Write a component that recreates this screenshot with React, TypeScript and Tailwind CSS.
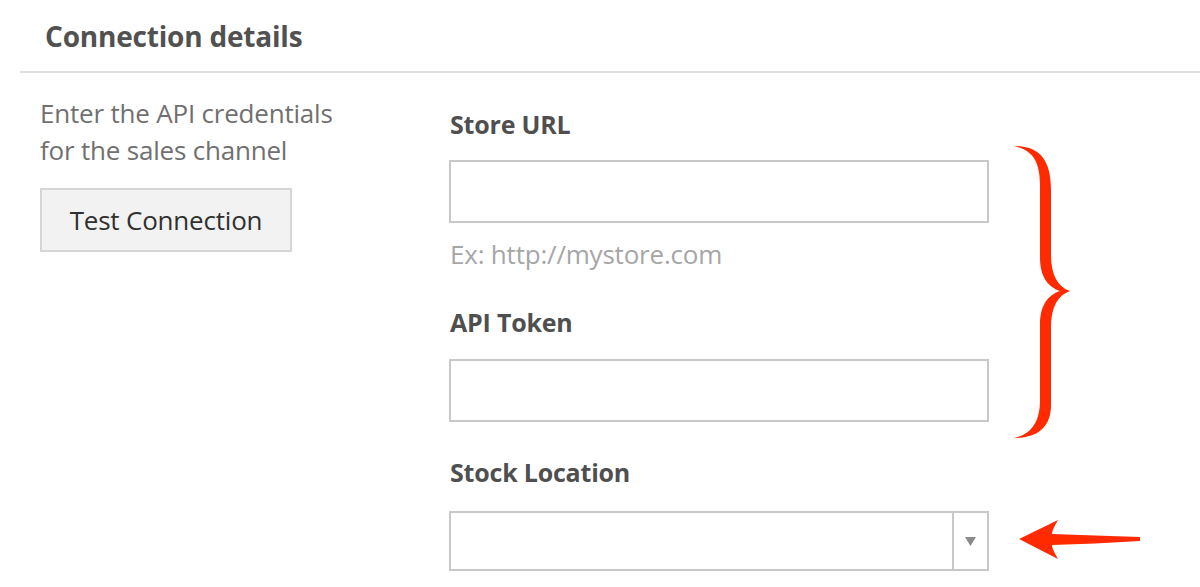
import React from "react";

const Brace = () => (
  <svg className="absolute left-0 top-0 pointer-events-none" width="1200" height="587" viewBox="0 0 1200 587">
    {/* curly brace */}
    <path
      d="M1014,146 C1040,146 1051,160 1051,190 L1051,255 C1051,275 1058,287 1070,291 C1058,295 1051,307 1051,327 L1051,405 C1051,425 1040,438 1014,438 C1033,434 1040,420 1040,400 L1040,325 C1040,305 1048,295 1060,291 C1048,287 1040,277 1040,257 L1040,185 C1040,162 1033,150 1014,146 Z"
      fill="#ff2a00"
    />
    {/* arrow */}
    <path
      d="M1019,539 L1058,520 C1054,527 1052,531 1052,534 C1080,535 1110,536 1140,537 L1140,541 C1110,543 1080,544 1052,545 C1052,548 1054,552 1058,559 Z"
      fill="#ff2a00"
    />
  </svg>
);

export default function App() {
  return (
    <div className="relative w-[1200px] h-[587px] overflow-hidden bg-white font-['Open_Sans',sans-serif]">
      {/* Header */}
      <div className="pl-[45px] pt-[17px] h-[71px]">
        <h2 className="text-[28px] leading-[38px] font-bold tracking-[-0.2px] text-[#515151]">Connection details</h2>
      </div>
      <div className="ml-[20px] h-[2px] bg-[#dedede]" />

      {/* Body */}
      <div className="flex pl-[40px]">
        <div className="w-[409px] pt-[22px]">
          <p className="text-[26px] leading-[37px] tracking-[-0.2px] text-[#707070]">
            Enter the API credentials
            <br />
            for the sales channel
          </p>
          <button className="mt-[19px] h-[64px] w-[252px] border-2 border-[#d6d6d6] bg-[#f2f2f2] text-[26px] tracking-[-0.2px] text-[#303030]">
            Test Connection
          </button>
        </div>

        <div className="w-[540px] pt-[33px]">
          <label className="block pl-[1px] text-[25px] leading-[36px] font-bold tracking-[-0.2px] text-[#4f4f4f]">Store URL</label>
          <input className="mt-[18px] block h-[63px] w-[540px] border-2 border-[#c8c8c8] bg-white outline-none" />
          <div className="mt-[13px] pl-[1px] text-[26px] leading-[36px] tracking-[-0.2px] text-[#a6a6a6]">Ex: http://mystore.com</div>

          <label className="mt-[32px] block pl-[1px] text-[25px] leading-[36px] font-bold tracking-[-0.2px] text-[#4f4f4f]">API Token</label>
          <input className="mt-[19px] block h-[63px] w-[540px] border-2 border-[#c8c8c8] bg-white outline-none" />

          <label className="mt-[32px] block pl-[1px] text-[25px] leading-[36px] font-bold tracking-[-0.2px] text-[#4f4f4f]">Stock Location</label>
          <div className="mt-[21px] flex h-[60px] w-[540px] border-2 border-[#c8c8c8] bg-white">
            <div className="flex-1" />
            <div className="flex w-[35px] items-center justify-center border-l-2 border-[#c8c8c8]">
              <svg width="11" height="9" viewBox="0 0 11 9">
                <path d="M0,0 L11,0 L5.5,9 Z" fill="#8a8a8a" />
              </svg>
            </div>
          </div>
        </div>
      </div>

      <Brace />
    </div>
  );
}
